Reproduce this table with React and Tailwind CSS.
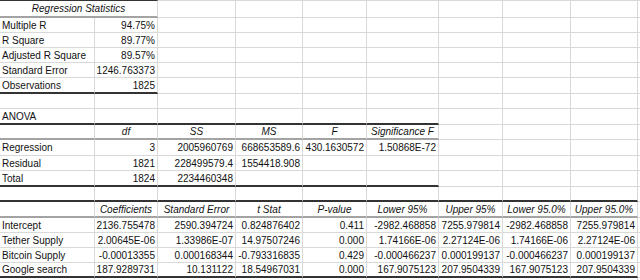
const LINE = {
  grid: 'border-b border-b-[#d9d9d9]',
  head: 'border-b-2 border-b-[#a3a3a3]',
  dark: 'border-b-2 border-b-[#333333]',
};

const ALIGN = {
  l: 'justify-start',
  r: 'justify-end',
  c: 'justify-center italic',
};

// one cell: [text, align, span]
const L = (t) => ({ t, a: 'l' });
const R = (t) => ({ t, a: 'r' });
const H = (t, span = 1) => ({ t, a: 'c', span });
const E = { t: '', a: 'l' };

const pad = (cells, n = 10) => {
  const used = cells.reduce((s, c) => s + (c.span || 1), 0);
  return [...cells, ...Array.from({ length: n - used }, () => E)];
};

// rows: cells + how many leading columns get a table border
const ROWS = [
  { cells: [H('Regression Statistics', 2)], line: 'head', upto: 2, top: true },
  { cells: [L('Multiple R'), R('94.75%')] },
  { cells: [L('R Square'), R('89.77%')] },
  { cells: [L('Adjusted R Square'), R('89.57%')] },
  { cells: [L('Standard Error'), R('1246.763373')] },
  { cells: [L('Observations'), R('1825')], line: 'dark', upto: 2 },
  { cells: [] },
  { cells: [L('ANOVA')], line: 'dark', upto: 6 },
  { cells: [E, H('df'), H('SS'), H('MS'), H('F'), H('Significance F')], line: 'head', upto: 6 },
  { cells: [L('Regression'), R('3'), R('2005960769'), R('668653589.6'), R('430.1630572'), R('1.50868E-72')] },
  { cells: [L('Residual'), R('1821'), R('228499579.4'), R('1554418.908')] },
  { cells: [L('Total'), R('1824'), R('2234460348')], line: 'dark', upto: 6 },
  { cells: [], line: 'dark', upto: 9 },
  {
    cells: [E, H('Coefficients'), H('Standard Error'), H('t Stat'), H('P-value'), H('Lower 95%'), H('Upper 95%'), H('Lower 95.0%'), H('Upper 95.0%')],
    line: 'head',
    upto: 9,
  },
  { cells: [L('Intercept'), R('2136.755478'), R('2590.394724'), R('0.824876402'), R('0.411'), R('-2982.468858'), R('7255.979814'), R('-2982.468858'), R('7255.979814')] },
  { cells: [L('Tether Supply'), R('2.00645E-06'), R('1.33986E-07'), R('14.97507246'), R('0.000'), R('1.74166E-06'), R('2.27124E-06'), R('1.74166E-06'), R('2.27124E-06')] },
  { cells: [L('Bitcoin Supply'), R('-0.00013355'), R('0.000168344'), R('-0.793316835'), R('0.429'), R('-0.000466237'), R('0.000199137'), R('-0.000466237'), R('0.000199137')] },
  { cells: [L('Google search'), R('187.9289731'), R('10.131122'), R('18.54967031'), R('0.000'), R('167.9075123'), R('207.9504339'), R('167.9075123'), R('207.9504339')], line: 'dark', upto: 9 },
  { cells: [] },
];

export default function App() {
  return (
    <div className="h-[280px] w-[640px] overflow-hidden bg-white font-['Liberation_Sans',Arial,sans-serif] text-[10px] leading-none text-[#111111]">
      <div className="grid grid-cols-[95px_63px_78px_67px_64px_72px_64px_68px_67px_1fr] grid-rows-[18px_15px_15px_15px_15px_16px_15px_16px_15px_16px_15px_16px_15px_16px_15px_15px_15px_15px_20px]">
        {ROWS.map((row, ri) => {
          let col = 0;
          return pad(row.cells).map((c, ci) => {
            const start = col;
            col += c.span || 1;
            const inTable = row.line && start < row.upto;
            const line = inTable ? LINE[row.line] : LINE.grid;
            const top = row.top
              ? start < 2
                ? 'border-t border-t-[#333333]'
                : 'border-t border-t-[#d9d9d9]'
              : '';
            return (
              <div
                key={`${ri}-${ci}`}
                className={`flex items-center overflow-hidden whitespace-nowrap border-r border-r-[#d9d9d9] px-[2px] pt-[1px] ${
                  c.span === 2 ? 'col-span-2' : ''
                } ${ALIGN[c.a]} ${line} ${top}`}
              >
                {c.t}
              </div>
            );
          });
        })}
      </div>
    </div>
  );
}
